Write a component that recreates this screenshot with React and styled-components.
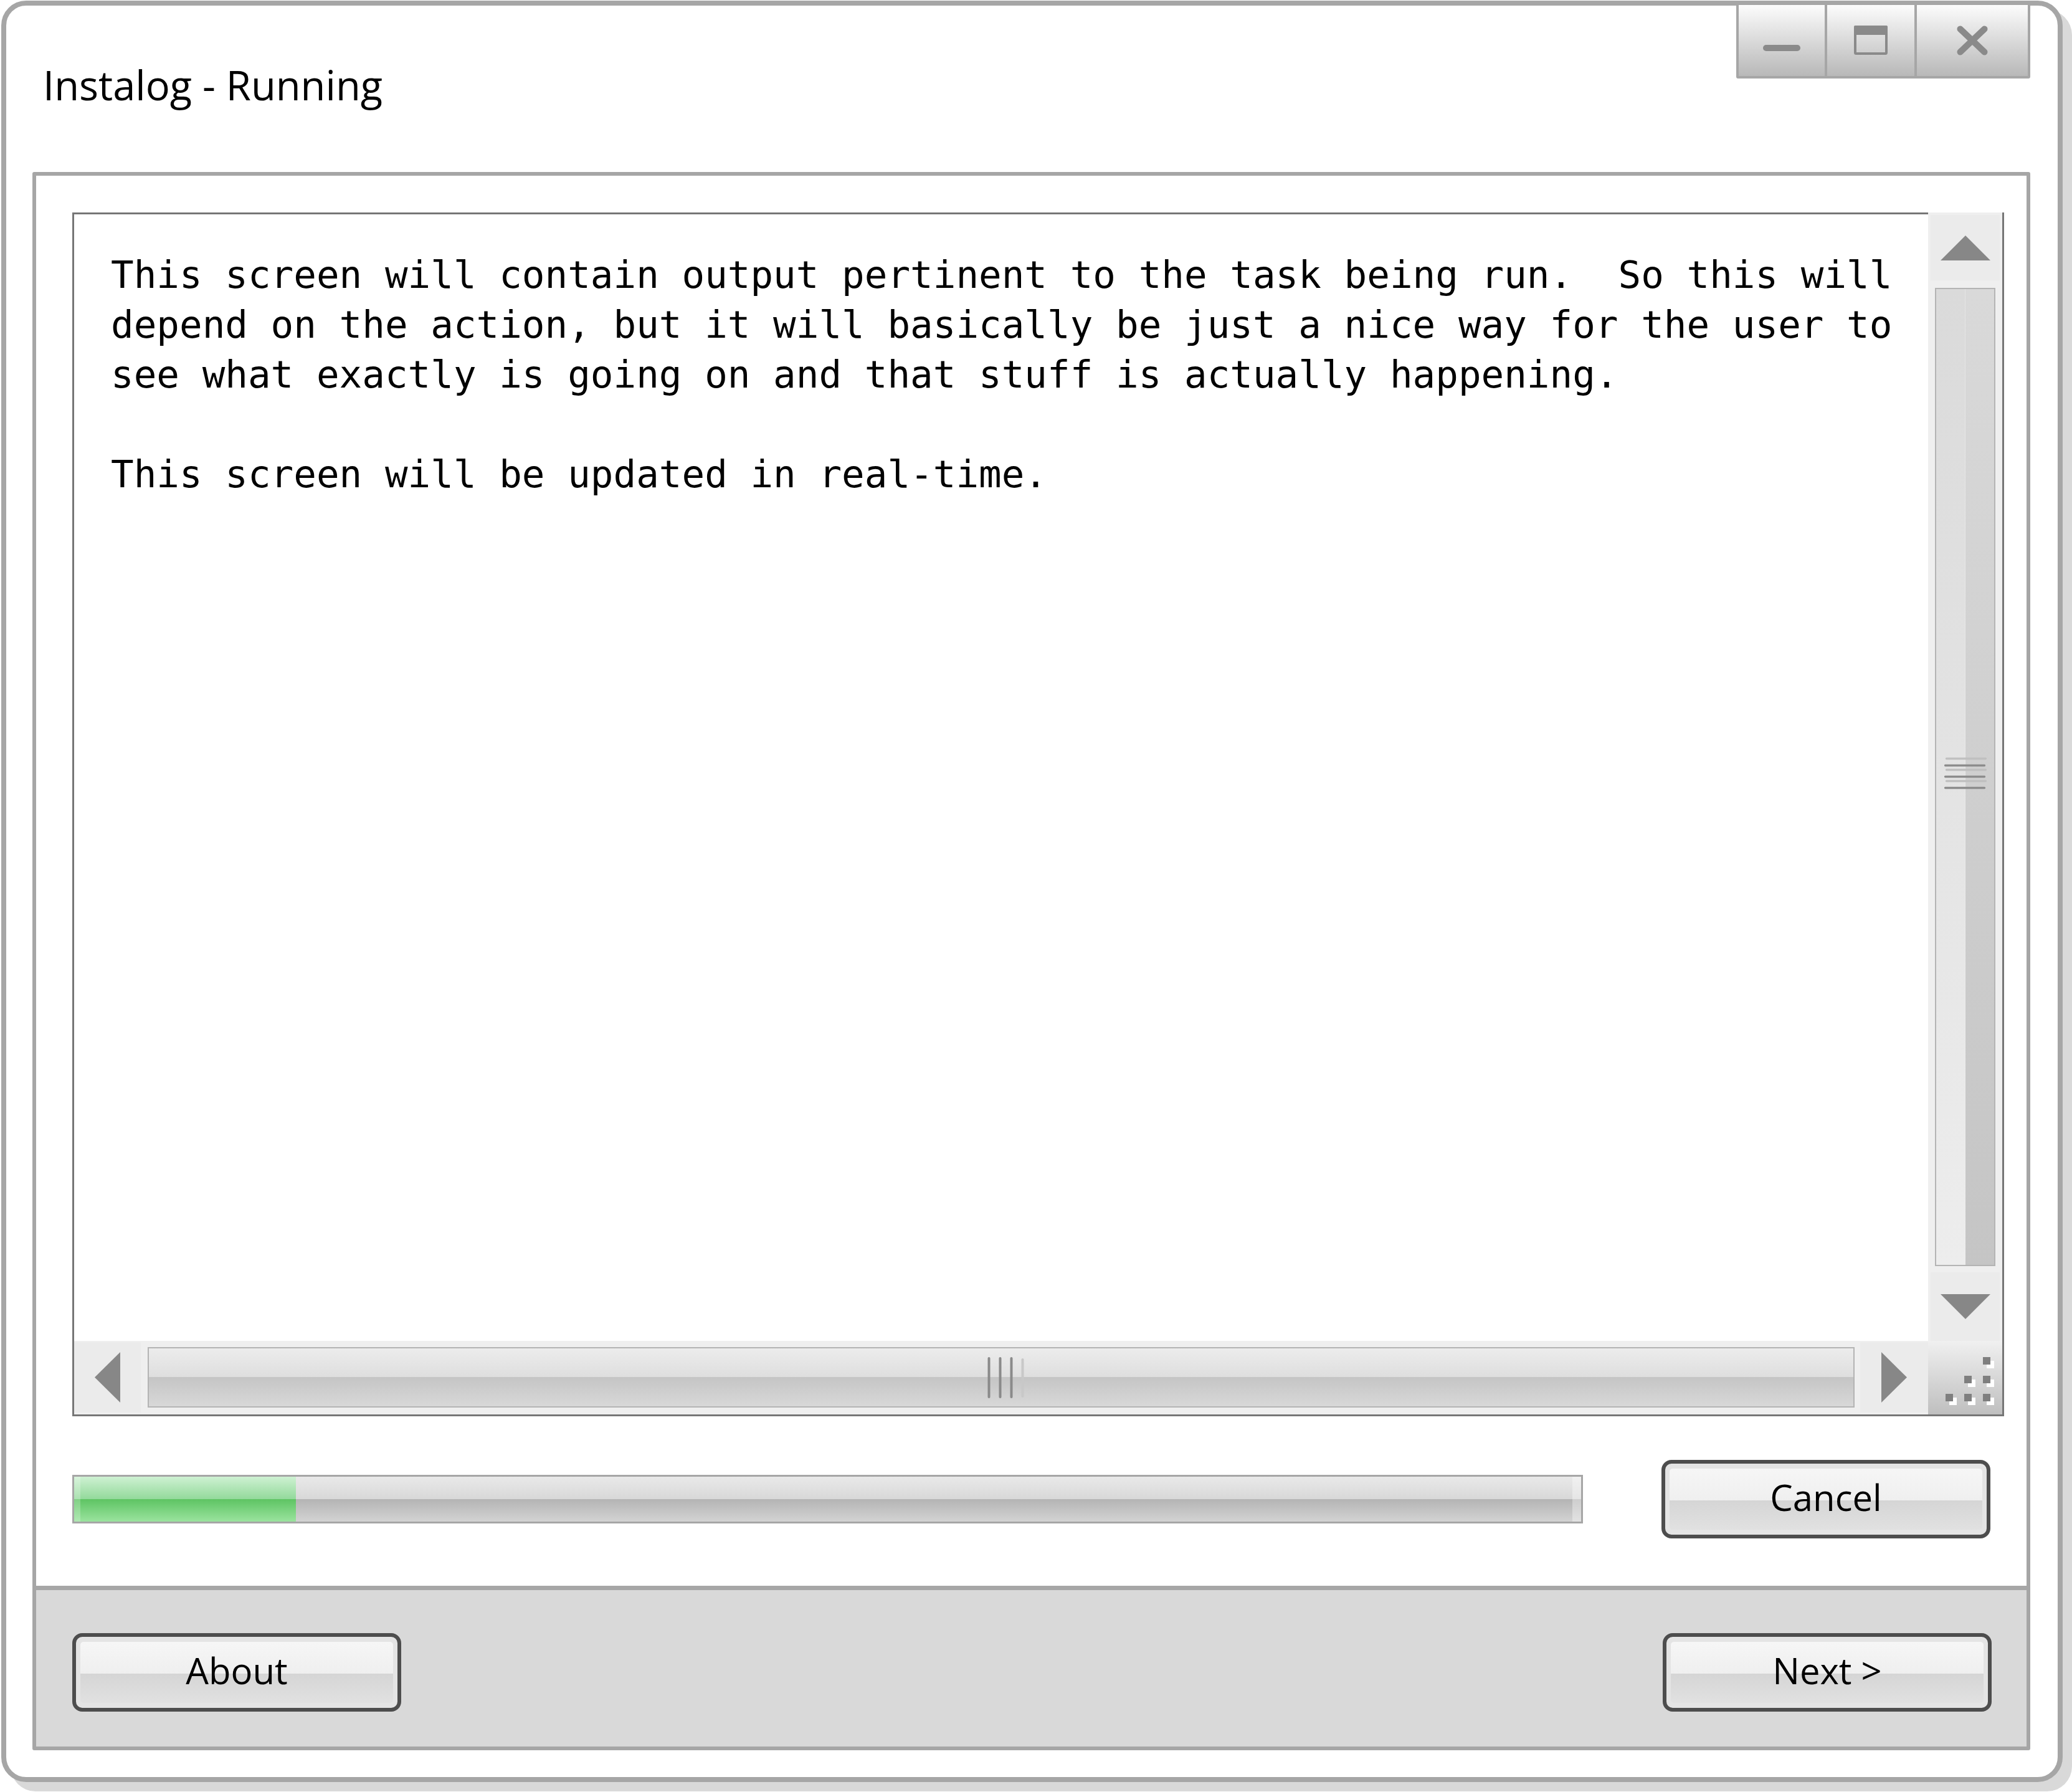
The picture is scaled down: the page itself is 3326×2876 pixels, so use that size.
import React from "react";
import styled, { createGlobalStyle } from "styled-components";

const GlobalStyle = createGlobalStyle`
  html, body { margin: 0; padding: 0; background: #ffffff; }
  body { width: 3326px; height: 2876px; overflow: hidden; font-family: "Open Sans", sans-serif; }
  *, *::before, *::after { box-sizing: border-box; }
`;

const Window = styled.div`
  margin: 1px 0 0 2px;
  width: 3309px;
  border: 8px solid #a6a6a6;
  border-radius: 40px;
  box-shadow: 15px 15px 0 #d9d9d9;
  background: #ffffff;
  padding: 0 44px 43px 42px;
  display: flex;
  flex-direction: column;
`;

const Header = styled.header`
  height: 267px;
  display: flex;
  justify-content: space-between;
  align-items: flex-start;
`;

const Title = styled.h1`
  margin: 83px 0 0 17px;
  font-family: "Open Sans", sans-serif;
  font-weight: 400;
  font-size: 65px;
  line-height: 88px;
  color: #000000;
`;

const Controls = styled.div`
  display: flex;
  margin-top: -5px;
  height: 122px;
  border: 4px solid #a6a6a6;
  border-radius: 0 0 3px 3px;
  overflow: hidden;
`;

const ControlButton = styled.div`
  width: ${(p) => p.$w}px;
  display: flex;
  align-items: center;
  justify-content: center;
  background: linear-gradient(#fcfcfc, #b8b8b8);
  & + & {
    border-left: 4px solid #a6a6a6;
  }
`;

const Panel = styled.section`
  border: 6px solid #a6a6a6;
  border-radius: 3px;
  display: flex;
  flex-direction: column;
  background: #ffffff;
`;

const MainArea = styled.div`
  padding: 59px 36px 76px 58px;
  display: flex;
  flex-direction: column;
`;

const LogBox = styled.div`
  height: 1932px;
  border: 3px solid #767676;
  display: grid;
  grid-template-columns: 1fr 119px;
  grid-template-rows: 1fr 118px;
  background: #ffffff;
`;

const LogText = styled.pre`
  grid-row: 1;
  grid-column: 1;
  margin: 0;
  padding: 57px 0 0 59px;
  overflow: hidden;
  font-family: "DejaVu Sans Mono", "Liberation Mono", monospace;
  font-size: 60.9px;
  line-height: 80px;
  white-space: pre;
  color: #000000;
`;

const VScroll = styled.div`
  grid-row: 1;
  grid-column: 2;
  margin-top: -3px;
  padding: 4px 4px 0;
  background: #efefef;
  display: flex;
  flex-direction: column;
`;

const HScroll = styled.div`
  grid-row: 2;
  grid-column: 1;
  padding: 2px 0 3px 0;
  background: #efefef;
  display: flex;
`;

const ArrowButton = styled.div`
  flex: none;
  ${(p) => (p.$h ? `height: ${p.$h}px;` : "")}
  ${(p) => (p.$w ? `width: ${p.$w}px;` : "")}
  background: #ebebeb;
  display: flex;
  align-items: center;
  justify-content: center;
`;

const VTrack = styled.div`
  flex: 1;
  margin: 12px 7px 10px;
  border: 2px solid #b4b4b4;
  background:
    linear-gradient(#dadada, #ededed) left top / 50% 100% no-repeat,
    linear-gradient(#d9d9d9, #c5c5c5) right top / 50% 100% no-repeat;
  display: flex;
  align-items: center;
  justify-content: center;
`;

const HTrack = styled.div`
  flex: 1;
  margin: 8px 9px 8px 11px;
  border: 2px solid #b4b4b4;
  background: linear-gradient(#ececec 0%, #dedede 50%, #c5c5c5 50%, #d8d8d8 100%);
  display: flex;
  align-items: center;
  justify-content: center;
`;

const Grip = styled.svg`
  flex: none;
  display: block;
  margin: ${(p) => p.$m || "0"};
`;

const Corner = styled.div`
  grid-row: 2;
  grid-column: 2;
  background: linear-gradient(#f0f0f0, #bfbfbf);
`;

const ProgressRow = styled.div`
  display: flex;
  align-items: center;
  gap: 126px;
  margin-top: 70px;
  height: 126px;
  padding-right: 22px;
`;

const Progress = styled.div`
  flex: 1;
  height: 78px;
  border: 3px solid #a6a6a6;
  background: linear-gradient(#e9e9e9 0%, #d8d8d8 50%, #b4b4b4 50%, #d3d3d3 100%);
  box-shadow: inset -14px 0 0 rgba(255, 255, 255, 0.35);
  display: flex;
`;

const ProgressFill = styled.div`
  height: 100%;
  background: linear-gradient(#cef1d2 0%, #93d99b 50%, #5ec463 50%, #9ae39e 100%);
  box-shadow: inset 10px 0 0 rgba(255, 255, 255, 0.22);
`;

const Footer = styled.footer`
  height: 258px;
  border-top: 7px solid #a6a6a6;
  background: #d9d9d9;
  display: flex;
  justify-content: space-between;
  align-items: flex-start;
  padding: 69px 56px 0 58px;
`;

const PushButton = styled.button`
  flex: none;
  width: 528px;
  height: 126px;
  border: 6px solid #4d4d4d;
  border-radius: 16px;
  background: #e4e4e4;
  padding: 8px 7px;
  margin: 0;
  font-family: "Open Sans", sans-serif;
  font-size: 58px;
  color: #000000;
  cursor: default;
`;

const Face = styled.span`
  display: flex;
  align-items: center;
  justify-content: center;
  height: 100%;
  padding-bottom: 6px;
  border-radius: 5px;
  background: linear-gradient(#f6f6f6 0%, #efefef 52%, #d5d5d5 52%, #e1e1e1 100%);
  line-height: 1;
`;

const ICON = "#8a8a8a";
const ARROW = "#878787";

const MinIcon = () => (
  <svg width="60" height="48" viewBox="0 0 60 48">
    <rect x="0" y="31" width="60" height="10" rx="5" fill={ICON} />
  </svg>
);

const MaxIcon = () => (
  <svg width="60" height="48" viewBox="0 0 60 48">
    <rect x="5" y="2" width="50" height="43" rx="1.5" fill="none" stroke={ICON} strokeWidth="4" />
    <rect x="3" y="0" width="54" height="15" rx="2" fill={ICON} />
  </svg>
);

const CloseIcon = () => (
  <svg width="60" height="48" viewBox="0 0 60 48">
    <path d="M10.5 5.5 L49.5 42.5 M49.5 5.5 L10.5 42.5" stroke={ICON} strokeWidth="10" strokeLinecap="round" fill="none" />
  </svg>
);

const Tri = ({ dir }) => {
  const shapes = {
    up: { w: 80, h: 40, pts: "40,0 80,40 0,40" },
    down: { w: 80, h: 40, pts: "0,0 80,0 40,40" },
    left: { w: 41, h: 81, pts: "41,0 41,81 0,40.5" },
    right: { w: 41, h: 81, pts: "0,0 41,40.5 0,81" },
  };
  const s = shapes[dir];
  return (
    <svg width={s.w} height={s.h} viewBox={`0 0 ${s.w} ${s.h}`} style={{ display: "block" }}>
      <polygon points={s.pts} fill={ARROW} />
    </svg>
  );
};

const VGrip = () => (
  <Grip width="68" height="54" viewBox="0 0 68 54" $m="-12px 0 0 0">
    {[3.5, 21.5, 39.5].map((y) => (
      <line key={"l" + y} x1="3.5" y1={y} x2="66.5" y2={y} stroke="#c0c0c0" strokeWidth="3.3" strokeLinecap="round" />
    ))}
    {[14.5, 32.5, 50.5].map((y) => (
      <line key={"d" + y} x1="1.5" y1={y} x2="64.5" y2={y} stroke="#8c8c8c" strokeWidth="3.3" strokeLinecap="round" />
    ))}
  </Grip>
);

const HGrip = () => (
  <Grip width="60" height="66" viewBox="0 0 60 66" $m="0 0 0 16px">
    {[2.5, 20.5, 38.5].map((x) => (
      <line key={x} x1={x} y1="2" x2={x} y2="64" stroke="#8a8a8a" strokeWidth="4" strokeLinecap="round" />
    ))}
    <line x1="56.5" y1="4" x2="56.5" y2="63" stroke="#c8c8c8" strokeWidth="4" strokeLinecap="round" />
  </Grip>
);

const ResizeGrip = () => {
  const dots = [
    [88, 26],
    [58, 56],
    [88, 56],
    [28, 85],
    [58, 85],
    [88, 85],
  ];
  return (
    <svg width="119" height="118" viewBox="0 0 119 118" style={{ display: "block" }}>
      {dots.map(([x, y]) => (
        <rect key={"w" + x + y} x={x + 6} y={y + 6} width="12" height="12" fill="#ffffff" />
      ))}
      {dots.map(([x, y]) => (
        <rect key={"d" + x + y} x={x} y={y} width="12" height="12" fill="#7f7f7f" />
      ))}
    </svg>
  );
};

const LOG_LINES = [
  "This screen will contain output pertinent to the task being run.  So this will",
  "depend on the action, but it will basically be just a nice way for the user to",
  "see what exactly is going on and that stuff is actually happening.",
  "",
  "This screen will be updated in real-time.",
];

const progress = 14.7;

export default function App() {
  return (
    <>
      <GlobalStyle />
      <Window>
        <Header>
          <Title>Instalog - Running</Title>
          <Controls>
            <ControlButton $w={138}>
              <MinIcon />
            </ControlButton>
            <ControlButton $w={144}>
              <MaxIcon />
            </ControlButton>
            <ControlButton $w={182}>
              <CloseIcon />
            </ControlButton>
          </Controls>
        </Header>
        <Panel>
          <MainArea>
            <LogBox>
              <LogText>{LOG_LINES.join("\n")}</LogText>
              <VScroll>
                <ArrowButton $h={105}>
                  <Tri dir="up" />
                </ArrowButton>
                <VTrack>
                  <VGrip />
                </VTrack>
                <ArrowButton $h={110}>
                  <Tri dir="down" />
                </ArrowButton>
              </VScroll>
              <HScroll>
                <ArrowButton $w={107}>
                  <Tri dir="left" />
                </ArrowButton>
                <HTrack>
                  <HGrip />
                </HTrack>
                <ArrowButton $w={109}>
                  <Tri dir="right" />
                </ArrowButton>
              </HScroll>
              <Corner>
                <ResizeGrip />
              </Corner>
            </LogBox>
            <ProgressRow>
              <Progress>
                <ProgressFill style={{ width: `${progress}%` }} />
              </Progress>
              <PushButton>
                <Face>Cancel</Face>
              </PushButton>
            </ProgressRow>
          </MainArea>
          <Footer>
            <PushButton>
              <Face>About</Face>
            </PushButton>
            <PushButton>
              <Face>Next &gt;</Face>
            </PushButton>
          </Footer>
        </Panel>
      </Window>
    </>
  );
}
